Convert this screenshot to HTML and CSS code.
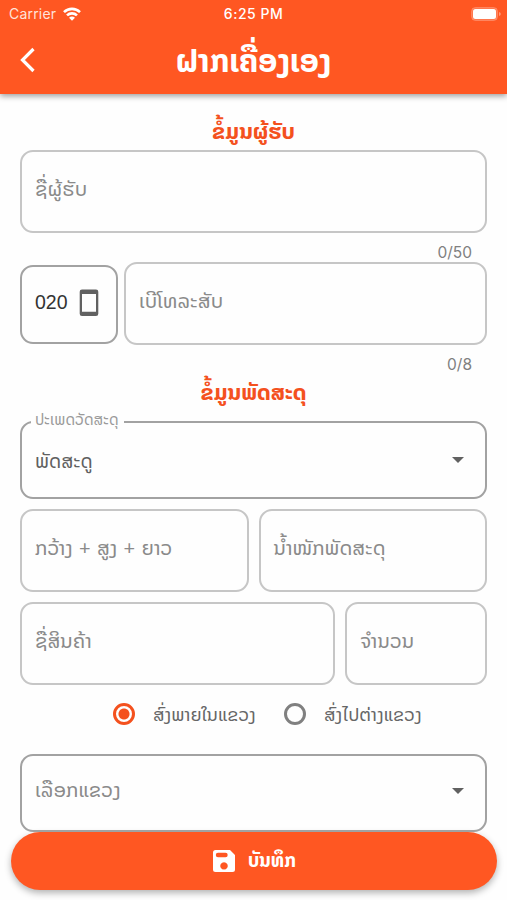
FILE: index.html
```html
<!DOCTYPE html>
<html lang="lo">
<head>
    <meta charset="UTF-8">
    <meta name="viewport" content="width=device-width, initial-scale=1.0">
    <title>ຝາກເຄື່ອງເອງ</title>
    <link rel="stylesheet" href="styles.css">
</head>
<body>

    <header class="appbar">
        <div class="status">
            <div class="carrier">
                <span>Carrier</span>
                <svg width="18" height="14" viewBox="0 0 18 14" fill="none" stroke="#fff" stroke-width="2.6">
                    <path d="M1 5.100a11.600 11.600 0 0 1 16 0"/>
                    <path d="M4 8.400a7.200 7.200 0 0 1 10 0"/>
                    <path d="M9 13.800L6 10.800a4.400 4.400 0 0 1 6 0z" fill="#fff" stroke="none"/>
                </svg>
            </div>
            <span class="time">6:25 PM</span>
            <svg class="battery" width="30" height="14" viewBox="0 0 30 14">
                <rect x=".5" y=".5" width="26" height="13" rx="4" fill="#fff" fill-opacity=".2" stroke="#fff" stroke-opacity=".2"/>
                <rect x="2" y="2" width="23" height="10" rx="2.5" fill="#fff"/>
                <path d="M28 5v4q1.800-.6 1.800-2T28 5z" fill="#fff" fill-opacity=".4"/>
            </svg>
        </div>
        <div class="toolbar">
            <svg class="back" width="16" height="26" viewBox="0 0 16 26" fill="none" stroke="#fff" stroke-width="3.2">
                <path d="M13.500 2L2.500 13l11 11"/>
            </svg>
            <h1>ຝາກເຄື່ອງເອງ</h1>
        </div>
    </header>

    <main class="form">
        <h2>ຂໍ້ມູນຜູ້ຮັບ</h2>
        <div class="field"><span>ຊື່ຜູ້ຮັບ</span></div>
        <div class="counter">0/50</div>

        <div class="row phone-row">
            <div class="field dark prefix">
                <span>020</span>
                <svg width="20" height="28" viewBox="0 0 20 28">
                    <path fill="#616161" fill-rule="evenodd" d="M3 .5h14A2.300 2.300 0 0 1 19.300 2.800v22A2.300 2.300 0 0 1 17 27.100H3A2.300 2.300 0 0 1 .7 24.800v-22A2.300 2.300 0 0 1 3 .5zM3 5v17.800h14V5z"/>
                </svg>
            </div>
            <div class="field grow"><span>ເບີໂທລະສັບ</span></div>
        </div>
        <div class="counter">0/8</div>

        <h2 class="parcel-title">ຂໍ້ມູນພັດສະດຸ</h2>
        <fieldset class="select">
            <legend>ປະເພດວັດສະດຸ</legend>
            <div class="select-inner">
                <span class="value">ພັດສະດູ</span>
                <i class="caret"></i>
            </div>
        </fieldset>

        <div class="row">
            <div class="field grow"><span class="size">ກວ້າງ + ສູງ + ຍາວ</span></div>
            <div class="field grow"><span>ນ້ຳໜັກພັດສະດຸ</span></div>
        </div>
        <div class="row">
            <div class="field grow"><span>ຊື່ສິນຄ້າ</span></div>
            <div class="field qty"><span>ຈຳນວນ</span></div>
        </div>

        <div class="radios">
            <i class="radio on"></i>
            <span>ສົ່ງພາຍໃນແຂວງ</span>
            <i class="radio"></i>
            <span>ສົ່ງໄປຕ່າງແຂວງ</span>
        </div>

        <div class="field dark province">
            <span>ເລືອກແຂວງ</span>
            <i class="caret"></i>
        </div>
    </main>

    <button class="save">
        <svg width="24" height="24" viewBox="0 0 24 24">
            <path fill="#fff" fill-rule="evenodd" d="M3.500 1H18l5 5v14.500a2.500 2.500 0 0 1-2.500 2.500h-17A2.500 2.500 0 0 1 1 20.500v-17A2.500 2.500 0 0 1 3.500 1zM6 3.800a2.200 2.200 0 0 0 0 4.400h7.500a2.200 2.200 0 0 0 0-4.400zM12 13.200a3.700 3.700 0 1 0 .01 0z"/>
        </svg>
        <span>ບັນທຶກ</span>
    </button>

</body>
</html>
```

FILE: styles.css
```css
* {
    box-sizing: border-box;
}
body {
    margin: 0;
    height: 900px;
    overflow: hidden;
    background: #fefefe;
    font-family: "Noto Sans Lao", "DejaVu Sans", sans-serif;
    color: #8a8a8a;
}
.appbar {
    height: 94px;
    background: #ff5722;
    color: #fff;
    box-shadow: 0 2px 6px rgba(0,0,0,0.4);
}
.status {
    display: grid;
    grid-template-columns: 1fr auto 1fr;
    align-items: center;
    height: 27px;
    padding: 0 6px 0 9px;
    font-family: Inter, sans-serif;
    font-size: 14px;
}
.carrier {
    display: flex;
    align-items: center;
    gap: 7px;
    color: #ffe3da;
    letter-spacing: 0.2px;
}
.time {
    margin-right: 3px;
    font-weight: 500;
    letter-spacing: 0.5px;
}
.battery {
    justify-self: end;
}
.toolbar {
    display: grid;
    grid-template-columns: 60px 1fr 60px;
    align-items: center;
    height: 66px;
}
.back {
    margin-left: 20px;
}
h1 {
    margin: 2px 0 0;
    text-align: center;
    font-size: 31.500px;
    line-height: 40px;
    white-space: nowrap;
}
.form {
    display: flex;
    flex-direction: column;
    padding: 24px 20px 0;
}
h2 {
    margin: 0;
    height: 32px;
    line-height: 27px;
    font-size: 22px;
    text-align: center;
    color: #f4511e;
}
.field {
    display: flex;
    align-items: center;
    height: 83px;
    padding: 0 13px 7px;
    border: 2px solid #c6c6c6;
    border-radius: 13px;
    font-size: 20.300px;
    white-space: nowrap;
}
.dark {
    border-color: #a2a2a2;
}
.counter {
    height: 29px;
    padding: 10px 15px 0;
    line-height: 20px;
    text-align: right;
    font-family: Inter, sans-serif;
    font-size: 15.500px;
    color: #808080;
}
.row {
    display: flex;
    gap: 10px;
    margin-top: 10px;
}
.phone-row {
    gap: 6px;
    margin-top: 0;
}
.grow {
    flex: 1;
}
.prefix {
    width: 98px;
    height: 79px;
    margin-top: 3px;
    padding: 0 0 3px 13px;
    gap: 11px;
    font-family: "Liberation Sans", sans-serif;
    font-size: 19.500px;
    color: #333;
}
.prefix span {
    padding-bottom: 2px;
}
.parcel-title {
    margin-top: 5px;
}
.select {
    height: 86px;
    margin: 2px 0 0;
    min-width: 0;
    padding: 0 21px 0 13px;
    border: 2px solid #a2a2a2;
    border-radius: 13px;
}
.select legend {
    height: 18px;
    margin-left: -4px;
    padding: 0 5px 0 4px;
    font-size: 15.200px;
    line-height: 13px;
    color: #9a9a9a;
}
.select-inner {
    display: flex;
    align-items: center;
    justify-content: space-between;
    height: 58px;
}
.value {
    padding-top: 2px;
    font-size: 19.200px;
    color: #606060;
}
.size {
    word-spacing: 1px;
}
.caret {
    border: 6px solid transparent;
    border-top-color: #616161;
    border-bottom: 0;
}
.qty {
    width: 142px;
}
.radios {
    display: flex;
    align-items: center;
    height: 69px;
    padding: 0 0 11px 93px;
    font-size: 18.200px;
    color: #666;
    white-space: nowrap;
}
.radio {
    flex: none;
    width: 22px;
    height: 22px;
    border: 3px solid #808080;
    border-radius: 50%;
}
.radio.on {
    border-color: #f4511e;
    background: radial-gradient(circle, #f4511e 5px, transparent 6px);
}
.radios span {
    width: 131px;
    margin-left: 18px;
}
.province {
    height: 78px;
    padding-right: 21px;
    padding-bottom: 4px;
    justify-content: space-between;
}
.province span {
    padding-bottom: 3px;
}
.save {
    display: flex;
    align-items: center;
    justify-content: center;
    gap: 12px;
    width: 486px;
    height: 58px;
    margin: 0 0 0 11px;
    padding: 0 0 1px;
    border: 0;
    border-radius: 29px;
    background: #ff5722;
    box-shadow: 0 3px 7px rgba(0,0,0,0.3);
    color: #fff;
    font: bold 18.500px "Noto Sans Lao", "DejaVu Sans", sans-serif;
}
```
